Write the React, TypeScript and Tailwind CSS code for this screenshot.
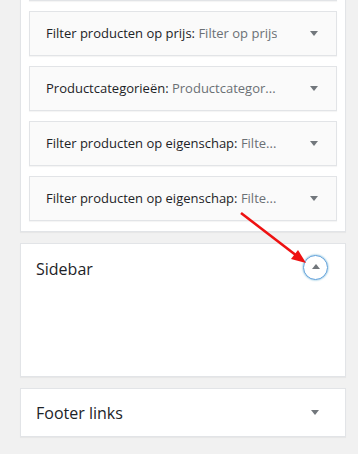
import React from "react";

type WidgetType = {
  title: string;
  subTitle: string;
};

const widgets: WidgetType[] = [
  { title: "Filter producten op prijs:", subTitle: "Filter op prijs" },
  { title: "Productcategorieën:", subTitle: "Productcategor..." },
  { title: "Filter producten op eigenschap:", subTitle: "Filte..." },
  { title: "Filter producten op eigenschap:", subTitle: "Filte..." },
];

function DownArrow() {
  return (
    <svg width="8" height="5" viewBox="0 0 8 5" className="shrink-0">
      <path d="M0 0h8L4 5z" fill="#72777c" />
    </svg>
  );
}

function UpArrow() {
  return (
    <svg width="8" height="5" viewBox="0 0 8 5">
      <path d="M0 5h8L4 0z" fill="#72777c" />
    </svg>
  );
}

export default function App() {
  return (
    <div
      className="relative min-h-[454px] w-full overflow-hidden bg-[#f1f1f1] pb-[19px] pl-[20px] pr-[12px]"
      style={{ fontFamily: '"Open Sans", "Noto Sans", Arial, sans-serif' }}
    >
      {/* widget area, its top is scrolled out of view */}
      <div className="-mt-[53px] border border-[#e2e4e7] bg-white px-[8px] pb-[10px] pt-[8px] shadow-[0_1px_1px_rgba(0,0,0,0.04)]">
        <div className="flex flex-col gap-[10px]">
          {/* widget cut off at the top edge */}
          <div className="h-[45px] border border-[#e2e4e7] bg-[#fafafa] shadow-[0_1px_1px_rgba(0,0,0,0.04)]" />
          {widgets.map((widget: WidgetType, index: number) => (
            <div
              key={`widget-${index}`}
              className="flex h-[45px] items-center justify-between border border-[#e2e4e7] bg-[#fafafa] pl-[16px] pr-[18px] shadow-[0_1px_1px_rgba(0,0,0,0.04)]"
            >
              <div className="truncate text-[13px] text-[#1d2327]">
                {widget.title}{" "}
                <span className="text-[#6b7075]">{widget.subTitle}</span>
              </div>
              <DownArrow />
            </div>
          ))}
        </div>
      </div>

      <div className="mt-[11px] h-[134px] border border-[#e2e4e7] bg-white shadow-[0_1px_1px_rgba(0,0,0,0.04)]">
        <div className="flex h-[47px] items-center justify-between pl-[15px] pr-[17px]">
          <span className="mt-[3px] text-[16px] text-[#1d2327]">Sidebar</span>
          <span className="flex h-[25px] w-[25px] items-center justify-center rounded-full border border-[#5b9dd9] pb-[2px] shadow-[0_0_2px_rgba(30,140,190,0.8)]">
            <UpArrow />
          </span>
        </div>
      </div>

      <div className="mt-[11px] flex h-[49px] items-center justify-between border border-[#e2e4e7] bg-white pl-[15px] pr-[26px] shadow-[0_1px_1px_rgba(0,0,0,0.04)]">
        <span className="text-[16px] text-[#1d2327]">Footer links</span>
        <DownArrow />
      </div>

      {/* red annotation arrow */}
      <svg
        className="pointer-events-none absolute left-0 top-0"
        width="358"
        height="454"
        viewBox="0 0 358 454"
      >
        <line x1="241" y1="213" x2="297" y2="256" stroke="#ee1111" strokeWidth="2.6" />
        <path d="M306 263 L291 259 L298 250 Z" fill="#ee1111" />
      </svg>
    </div>
  );
}
